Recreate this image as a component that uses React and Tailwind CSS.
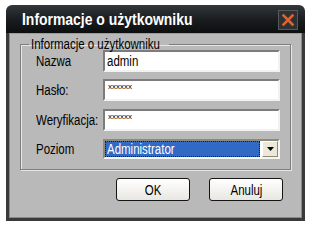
const FONT = {
  fontFamily: "'Liberation Sans', Arial, sans-serif",
};

// the skin uses a narrow face; squeeze Liberation Sans to its width
const Narrow = ({ children, center = false }) => (
  <span
    className={`inline-block whitespace-nowrap scale-x-[0.82] ${center ? "origin-center" : "origin-left"}`}
  >
    {children}
  </span>
);

const fieldClass =
  "h-[22px] w-[177px] bg-white border-2 border-t-[#7c7c7c] border-l-[#7c7c7c] border-b-[#f2f2f2] border-r-[#f2f2f2] px-[2px] text-black";

const Row = ({ label, children, className = "" }) => (
  <div className={`flex items-center ${className}`}>
    <div className="w-[67px] text-[14px] leading-[18px] text-black">
      <Narrow>{label}</Narrow>
    </div>
    {children}
  </div>
);

const DialogButton = ({ children }) => (
  <button className="w-[74px] h-[23px] rounded-[3px] border border-[#151515] bg-gradient-to-b from-white to-[#e9e7e2] text-[14px] leading-[20px] text-black">
    <Narrow center>{children}</Narrow>
  </button>
);

const App = () => {
  return (
    <div className="w-[310px] h-[226px] bg-white pl-[6px] pt-[5px]" style={FONT}>
      <div className="w-[299px] h-[216px] flex flex-col">
        {/* title bar */}
        <div className="h-[28px] rounded-t-[6px] bg-gradient-to-b from-[#34383b] via-[#1b1e20] to-[#0c0e0f] flex items-center pl-[16px] pr-[7px]">
          <div className="grow text-white font-bold text-[17px] leading-[20px] pt-[1px]">
            <Narrow>Informacje o użytkowniku</Narrow>
          </div>
          <div className="w-[20px] h-[20px] mt-[2px] bg-[#2e3134] border border-[#55595c] flex items-center justify-center">
            <svg width="12" height="12" viewBox="0 0 12 12">
              <path
                d="M1.5 1.5 L10.5 10.5 M10.5 1.5 L1.5 10.5"
                stroke="#e0622e"
                strokeWidth="2.6"
                strokeLinecap="square"
              />
            </svg>
          </div>
        </div>

        {/* body */}
        <div className="grow bg-[#b9b9b9] border-x-[3px] border-b-[3px] border-[#3a3a3a] shadow-[inset_1px_0_0_#8a8a8a,inset_-1px_0_0_#8a8a8a,inset_0_1px_0_#9c9c9c,inset_0_-1px_0_#8a8a8a] pt-[5px] px-[11px] flex flex-col">
          <fieldset className="border border-[#7e7e7e] shadow-[inset_1px_1px_0_#e6e6e6,1px_1px_0_#e6e6e6] pl-[15px] pr-[10px] pb-[10px]">
            <legend className="ml-[-7px] px-[2px] w-[140px] text-[14px] leading-[12px] text-black">
              <Narrow>Informacje o użytkowniku</Narrow>
            </legend>
            <Row label="Nazwa">
              <div className={`${fieldClass} text-[14px] leading-[18px]`}>
                <Narrow>admin</Narrow>
              </div>
            </Row>
            <Row label="Hasło:" className="mt-[7px]">
              <div className={`${fieldClass} text-[8px] leading-[9px] pt-[1px] pl-[3px]`}>xxxxxx</div>
            </Row>
            <Row label="Weryfikacja:" className="mt-[8px]">
              <div className={`${fieldClass} text-[8px] leading-[9px] pt-[1px] pl-[3px]`}>xxxxxx</div>
            </Row>
            <Row label="Poziom" className="mt-[8px]">
              <div className="h-[20px] w-[177px] border-2 border-t-[#8d8a7c] border-l-[#8d8a7c] border-b-[#f6f5ef] border-r-[#f6f5ef] bg-white flex">
                <div className="grow bg-[#316ac5] border border-dotted border-[#1a1a1a] text-white text-[14px] leading-[14px] pl-[1px]">
                  <Narrow>Administrator</Narrow>
                </div>
                <div className="w-[16px] ml-[2px] bg-[#ece9d8] border border-t-white border-l-white border-b-[#8d8a7c] border-r-[#8d8a7c] flex items-center justify-center">
                  <svg width="7" height="4" viewBox="0 0 7 4">
                    <path d="M0 0 H7 L3.5 4 Z" fill="#000" />
                  </svg>
                </div>
              </div>
            </Row>
          </fieldset>

          <div className="flex justify-end gap-[19px] mt-[8px] pr-[8px]">
            <DialogButton>OK</DialogButton>
            <DialogButton>Anuluj</DialogButton>
          </div>
        </div>
      </div>
    </div>
  );
};

export default App;
